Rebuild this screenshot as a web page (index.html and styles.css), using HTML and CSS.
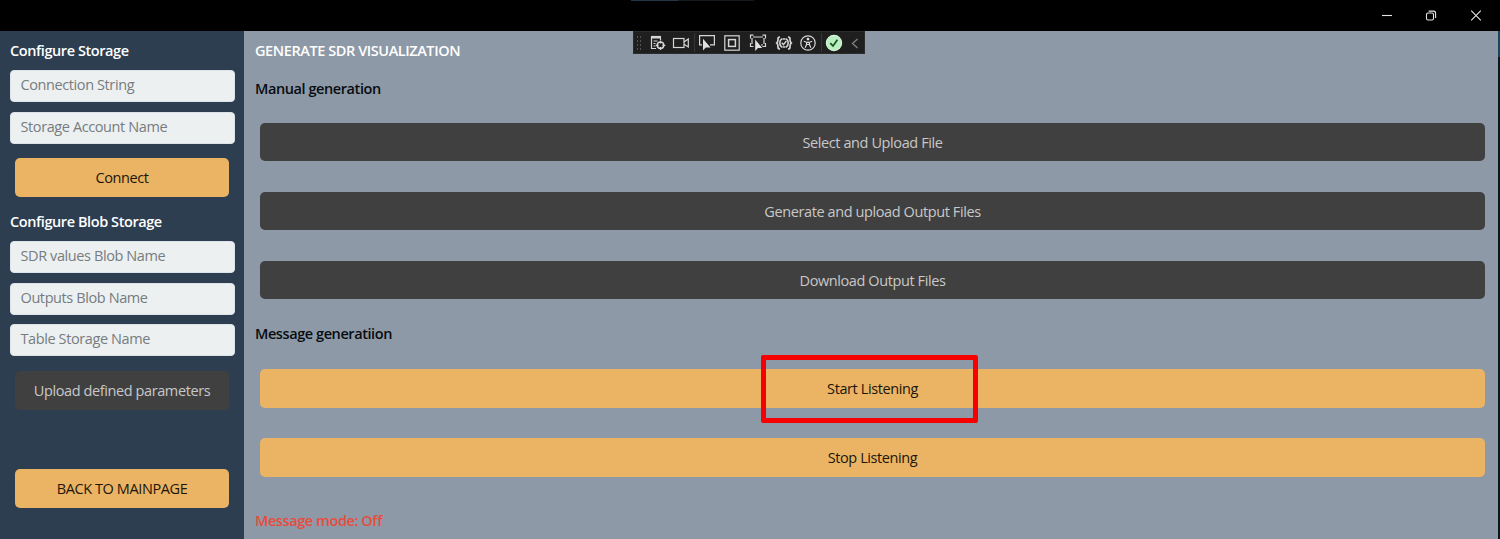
FILE: index.html
```html
<!DOCTYPE html>
<html lang="en">
<head>
<meta charset="utf-8">
<title>Generate SDR Visualization</title>
<link rel="stylesheet" href="styles.css">
</head>
<body>
<header class="titlebar">
  <svg class="win-icon" viewBox="0 0 12 12"><path d="M1 5.5H11"/></svg>
  <svg class="win-icon" viewBox="0 0 12 12"><rect x="1.5" y="3" width="7" height="7" rx="1.5"/><path d="M3.6 1.1H8.5Q10.6 1.1 10.6 3.2V7.9"/></svg>
  <svg class="win-icon" viewBox="0 0 12 12"><path d="M1.2 0.7L10.8 10.3M10.8 0.7L1.2 10.3"/></svg>
</header>
<div class="toolbar">
  <span class="grip"></span>
  <svg class="tool t1" viewBox="0 0 18 18"><path d="M2 3.2H12" stroke-width="2.6"/><path d="M2.5 3V14.5H7M11.5 4V6M4.5 7H8.5M4.5 9.5H6.5M4.5 12H6.5"/><circle cx="11.5" cy="11.3" r="3.2" stroke-width="1.5"/><path d="M11.5 6.5V9.5M11.5 13V16M6.8 11.3H9.5M13.5 11.3H16.3"/></svg>
  <svg class="tool t2" viewBox="0 0 18 18"><rect x="1.5" y="4.5" width="10.5" height="9"/><path d="M12 8L16.3 5V13L12 10.2"/></svg>
  <span class="divider"></span>
  <svg class="tool t3" viewBox="0 0 18 18"><path d="M4 10.8H1.6V1.7H16.4V10.8H12"/><path class="fill" d="M5 4.8V16.5L7.8 13.4H12.5Z"/></svg>
  <svg class="tool t4" viewBox="0 0 18 18"><rect x="1.8" y="1.8" width="14.4" height="14.4"/><rect x="5.6" y="5.6" width="6.8" height="6.8" stroke-width="1.5"/></svg>
  <svg class="tool t5" viewBox="0 0 18 18"><path d="M4 3H14M3 4V10M15 4V10M12 11H14"/><path d="M4.5 1.2H1.5V4.5M13.5 1.2H16.5V4.5M1.5 9V12.5H4.5M16.5 9V12.5H13.5"/><path class="fill" d="M6.2 5.5V17L9 14H13.2Z"/></svg>
  <svg class="tool t6" viewBox="0 0 18 18"><path d="M5 3Q2.8 3 3 5.5Q3 8 1.8 9Q3 10 3 12.5Q2.8 15 5 15M13 3Q15.2 3 15 5.5Q15 8 16.2 9Q15 10 15 12.5Q15.2 15 13 15" stroke-width="1.7"/><path d="M7 4.8Q4.8 6 4.8 9Q4.8 12 7 13.2M11 4.8Q13.2 6 13.2 9Q13.2 12 11 13.2" stroke-width="1.6"/><path d="M7.5 5H10.5M7.5 13H10.5M6.8 8.8L8.4 10.6L11.4 7" stroke-width="1.4"/></svg>
  <svg class="tool t7" viewBox="0 0 18 18"><circle cx="9" cy="9" r="7.2"/><circle class="fill" cx="9" cy="5.1" r="1.4"/><path d="M4.8 7.3L7.6 8.3V10.3L6.2 13.7M13.2 7.3L10.4 8.3V10.3L11.8 13.7M7.6 8.4H10.4M7.6 10.5H10.4"/></svg>
  <span class="divider"></span>
  <svg class="tool t8" viewBox="0 0 18 18"><circle class="ok" cx="9" cy="9" r="7.6"/><path class="check" d="M5.3 9.2L8 12L12.4 5.8"/></svg>
  <svg class="tool t9" viewBox="0 0 18 18"><path d="M11.5 5L6.5 9.5L11.5 14"/></svg>
</div>
<div class="app">
  <aside class="sidebar">
    <h2 class="heading">Configure Storage</h2>
    <div class="field first">Connection String</div>
    <div class="field second">Storage Account Name</div>
    <div class="button amber connect">Connect</div>
    <h2 class="heading blob">Configure Blob Storage</h2>
    <div class="field sdr">SDR values Blob Name</div>
    <div class="field stacked">Outputs Blob Name</div>
    <div class="field stacked">Table Storage Name</div>
    <div class="button dark upload">Upload defined parameters</div>
    <div class="button amber back">BACK TO MAINPAGE</div>
  </aside>
  <main class="main">
    <h1 class="heading title">GENERATE SDR VISUALIZATION</h1>
    <h2 class="heading manual">Manual generation</h2>
    <div class="actions">
      <div class="button dark">Select and Upload File</div>
      <div class="button dark">Generate and upload Output Files</div>
      <div class="button dark">Download Output Files</div>
    </div>
    <h2 class="heading message">Message generatiion</h2>
    <div class="actions listen">
      <div class="button amber">Start Listening<span class="highlight"></span></div>
      <div class="button amber">Stop Listening</div>
    </div>
    <p class="heading status">Message mode: Off</p>
  </main>
</div>
</body>
</html>
```
FILE: styles.css
```css
* { box-sizing: border-box; margin: 0; padding: 0; }
body {
  width: 1500px; height: 539px; overflow: hidden; position: relative;
  background: #000; font: 14.5px/20px "Open Sans", sans-serif; letter-spacing: -0.4px;
}
.titlebar {
  height: 31px; display: flex; justify-content: flex-end; align-items: center;
  gap: 32.5px; padding-right: 18.5px; background: #000;
}
.titlebar::before {
  content: ""; position: absolute; left: 631px; top: 0; width: 123px; height: 1px;
  background: linear-gradient(90deg, #253746 47px, #151a1e 47px);
}
.win-icon { width: 12px; height: 12px; fill: none; stroke: #e4e4e4; stroke-width: 1.1; }
.toolbar {
  position: absolute; left: 633px; top: 31px; width: 232px; height: 23px;
  display: flex; align-items: center; background: #1f1f1f; border: 1px solid #2c2c2c;
}
.grip {
  width: 7px; height: 16px; margin-left: 2px;
  background: radial-gradient(circle, #555 0.7px, transparent 1px) 0 0 / 3px 4px;
}
.tool { width: 18px; height: 18px; flex: none; fill: none; stroke: #d6d6d6; stroke-width: 1.2; }
.tool .fill { fill: #e0e0e0; stroke: none; }
.t1 { margin-left: 6px; }
.t2 { margin-left: 5px; }
.divider { width: 1px; height: 19px; background: #363636; margin: 0 3px 0 4px; }
.t4 { margin-left: 7px; }
.t5 { margin-left: 8px; }
.t6 { margin-left: 8px; }
.t7 { margin-left: 6px; }
.t8 { margin-left: 0; }
.t9 { margin-left: 3px; stroke: #858585; }
.tool .ok { fill: #b9efc0; stroke: #d5f5d9; }
.tool .check { stroke: #174e20; stroke-width: 1.7; }
.app { display: flex; height: 508px; padding-right: 2px; background: linear-gradient(#16455f 0 26px, #0b1620 26px); }
.sidebar { width: 244px; flex: none; background: #2c3e50; padding: 10px 10px 0; }
.main { flex: 1; background: #8d99a7; padding: 10px 8px 0 11px; }
.heading { height: 20px; font-size: 14.5px; font-weight: 600; line-height: 20px; letter-spacing: -0.42px; color: #fff; white-space: nowrap; }
.field {
  height: 32px; margin-right: -1px; border: 1px solid #dce4ea; border-radius: 4px;
  background: #ecf0f1; color: #777c80; padding: 4px 9.5px; white-space: nowrap;
}
.first { margin-top: 9px; }
.second { margin-top: 10px; }
.sdr { margin-top: 9px; }
.stacked { margin-top: 9.5px; }
.button {
  display: flex; align-items: center; justify-content: center; position: relative;
  height: 39px; margin: 0 5px; border-radius: 5px; white-space: nowrap; padding-top: 1px;
}
.amber { background: #eab464; color: #21160a; }
.dark { background: #404040; color: #c8c8c8; }
.connect { margin-top: 14px; }
.blob { margin-top: 15px; }
.upload { margin-top: 15px; }
.back { margin-top: 59px; }
.main .dark { height: 38px; }
.manual { margin-top: 18px; color: #080c10; }
.actions { display: flex; flex-direction: column; gap: 31px; margin-top: 24px; }
.message { margin-top: 25px; color: #080c10; }
.listen { margin-top: 24.5px; gap: 30px; }
.status { margin-top: 34px; color: #e74c3c; }
.highlight {
  position: absolute; left: 501px; top: -14px; width: 217px; height: 68px;
  border: 5px solid #f60000; border-radius: 2px;
}
```
